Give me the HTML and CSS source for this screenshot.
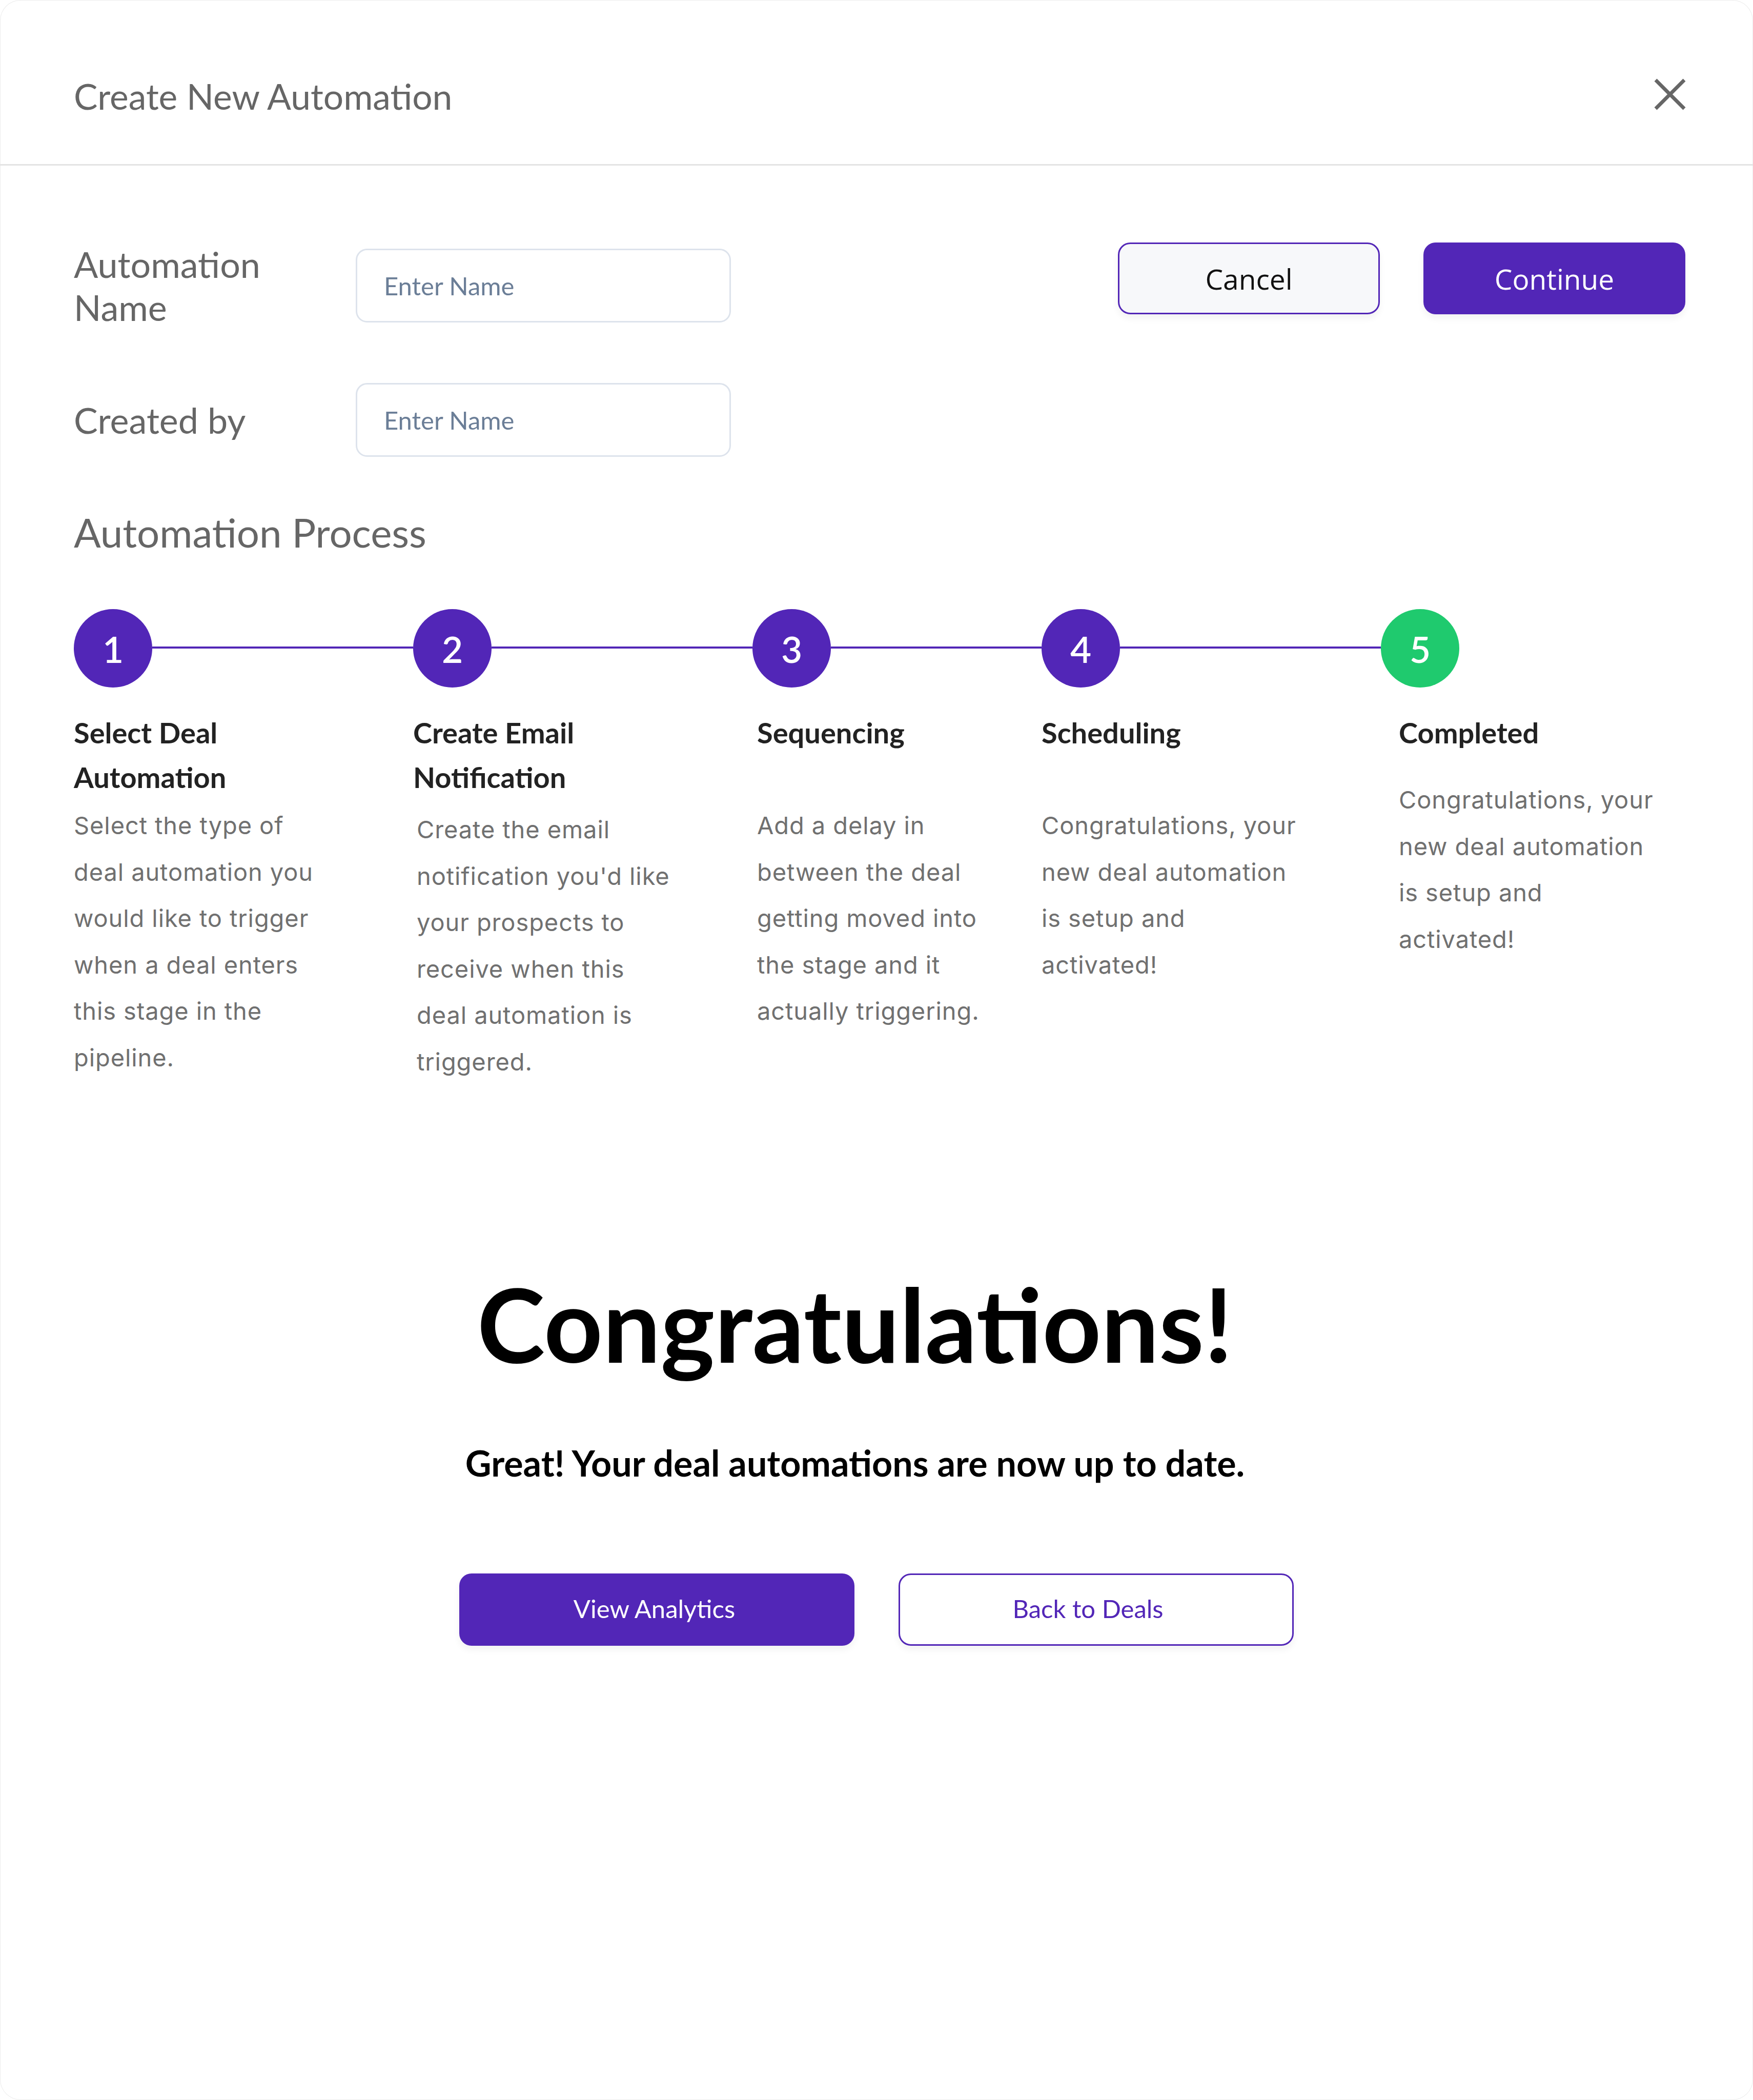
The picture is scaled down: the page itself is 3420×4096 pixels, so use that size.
FILE: index.html
```html
<!DOCTYPE html>
<html lang="en">
<head>
<meta charset="utf-8">
<title>Create New Automation</title>
<link rel="stylesheet" href="styles.css">
</head>
<body>
<div class="modal">
  <header class="modal-header">
    <h1 class="modal-title">Create New Automation</h1>
    <button class="close-btn" aria-label="Close">
      <svg width="64" height="64" viewBox="0 0 64 64"><path d="M4 4 L60 60 M60 4 L4 60" stroke="#666666" stroke-width="7" fill="none"/></svg>
    </button>
  </header>
  <main class="modal-body">
    <section class="top">
      <div class="form">
        <div class="field">
          <label class="field-label">Automation<br>Name</label>
          <input class="field-input" type="text" placeholder="Enter Name">
        </div>
        <div class="field field--second">
          <label class="field-label">Created by</label>
          <input class="field-input" type="text" placeholder="Enter Name">
        </div>
      </div>
      <div class="actions">
        <button class="btn btn-outline">Cancel</button>
        <button class="btn btn-primary">Continue</button>
      </div>
    </section>

    <h2 class="process-title">Automation Process</h2>

    <ol class="steps">
      <li class="step step--1">
        <div class="step-track"><span class="step-num">1</span><span class="step-line"></span></div>
        <h3 class="step-title">Select Deal<br>Automation</h3>
        <p class="step-desc">Select the type of<br>deal automation you<br>would like to trigger<br>when a deal enters<br>this stage in the<br>pipeline.</p>
      </li>
      <li class="step step--2">
        <div class="step-track"><span class="step-num">2</span><span class="step-line"></span></div>
        <h3 class="step-title">Create Email<br>Notification</h3>
        <p class="step-desc">Create the email<br>notification you'd like<br>your prospects to<br>receive when this<br>deal automation is<br>triggered.</p>
      </li>
      <li class="step step--3">
        <div class="step-track"><span class="step-num">3</span><span class="step-line"></span></div>
        <h3 class="step-title">Sequencing</h3>
        <p class="step-desc">Add a delay in<br>between the deal<br>getting moved into<br>the stage and it<br>actually triggering.</p>
      </li>
      <li class="step step--4">
        <div class="step-track"><span class="step-num">4</span><span class="step-line"></span></div>
        <h3 class="step-title">Scheduling</h3>
        <p class="step-desc">Congratulations, your<br>new deal automation<br>is setup and<br>activated!</p>
      </li>
      <li class="step step--5">
        <div class="step-track"><span class="step-num step-num--done">5</span></div>
        <h3 class="step-title">Completed</h3>
        <p class="step-desc">Congratulations, your<br>new deal automation<br>is setup and<br>activated!</p>
      </li>
    </ol>

    <section class="done">
      <h2 class="done-title">Congratulations!</h2>
      <p class="done-sub">Great! Your deal automations are now up to date.</p>
      <div class="done-actions">
        <button class="btn-lg btn-lg-primary">View Analytics</button>
        <button class="btn-lg btn-lg-outline">Back to Deals</button>
      </div>
    </section>
  </main>
</div>
</body>
</html>
```

FILE: styles.css
```css
* { box-sizing: border-box; }

html, body {
  margin: 0;
  padding: 0;
  background: #ffffff;
}

body {
  font-family: "Lato", "Liberation Sans", sans-serif;
}

.modal {
  width: 3420px;
  min-height: 4096px;
  background: #ffffff;
  border-radius: 40px;
  box-shadow: inset 0 0 0 1px #ececec;
}

.modal-header {
  height: 323px;
  padding: 54px 130px 0 144px;
  display: flex;
  align-items: center;
  justify-content: space-between;
  border-bottom: 3px solid #e3e3e3;
}

.modal-title {
  margin: 0;
  font-family: "Lato", sans-serif;
  font-weight: 400;
  font-size: 69.5px;
  line-height: 84px;
  color: #666666;
}

.close-btn {
  border: 0;
  background: none;
  padding: 0;
  width: 64px;
  height: 64px;
  margin-top: -6px;
  display: flex;
}

.modal-body {
  padding: 0 132px 0 144px;
}

.top {
  padding-top: 150px;
  display: flex;
  justify-content: space-between;
  align-items: flex-start;
}

.form {
  display: flex;
  flex-direction: column;
}

.field {
  display: flex;
  align-items: center;
}

.field--second {
  margin-top: 106px;
}

.field-label {
  width: 550px;
  font-family: "Lato", sans-serif;
  font-size: 70px;
  line-height: 84px;
  color: #666666;
}

.field-input {
  width: 732px;
  height: 144px;
  border: 3px solid #dde3ec;
  border-radius: 22px;
  padding: 0 0 0 52px;
  font-family: "Lato", sans-serif;
  font-size: 49px;
  color: #333;
  background: #ffffff;
  outline: none;
}

.field-input::placeholder {
  color: #6b7e97;
  opacity: 1;
}

.actions {
  display: flex;
  gap: 85px;
}

.btn {
  width: 511px;
  height: 140px;
  border-radius: 24px;
  font-family: "Open Sans", "Noto Sans", sans-serif;
  font-size: 55px;
  padding: 0;
  box-shadow: 0 8px 14px rgba(0, 0, 0, 0.05);
}

.btn-outline {
  background: #f7f8fa;
  border: 3px solid #5226b7;
  color: #111111;
}

.btn-primary {
  background: #5226b7;
  border: 0;
  color: #ffffff;
}

.process-title {
  margin: 100px 0 0 0;
  font-family: "Lato", sans-serif;
  font-weight: 400;
  font-size: 78px;
  line-height: 94px;
  color: #666666;
}

.steps {
  list-style: none;
  margin: 103px 0 0 0;
  padding: 0;
  display: flex;
}

.step { width: 662px; flex: none; }
.step--3 { width: 564px; }
.step--5 { flex: 1; width: auto; }

.step-track {
  display: flex;
  align-items: center;
}

.step-num {
  width: 153px;
  height: 153px;
  flex: none;
  border-radius: 50%;
  background: #5226b7;
  color: #ffffff;
  font-family: "Lato", sans-serif;
  font-weight: 600;
  font-size: 71px;
  display: flex;
  align-items: center;
  justify-content: center;
  padding-top: 2px;
}

.step-num--done {
  background: #1fca6e;
}

.step-line {
  flex: 1;
  height: 4px;
  margin-top: -4px;
  background: #5226b7;
}

.step-title {
  margin: 44px 0 0 0;
  min-height: 174px;
  font-family: "Lato", sans-serif;
  font-weight: 700;
  font-size: 56px;
  line-height: 87px;
  color: #222222;
}

.step-desc {
  margin: 6px 0 0 0;
  font-family: "Inter", "Liberation Sans", sans-serif;
  font-weight: 400;
  font-size: 47px;
  line-height: 90.5px;
  letter-spacing: 0.9px;
  color: #707070;
  white-space: nowrap;
}

.step--2 .step-desc {
  margin-top: 14px;
  padding-left: 7px;
}

.step--3 .step-title,
.step--3 .step-desc {
  padding-left: 9px;
}

.step--5 .step-title,
.step--5 .step-desc {
  padding-left: 35px;
}

.step--5 .step-title {
  min-height: 87px;
}

.step--5 .step-desc {
  margin-top: 43px;
}

.done {
  margin: 345px -132px 0 -144px;
  display: flex;
  flex-direction: column;
  align-items: center;
}

.done-title {
  margin: 0;
  padding-right: 84px;
  font-family: "Lato", sans-serif;
  font-weight: 700;
  font-size: 200px;
  line-height: 240px;
  color: #000000;
}

.done-sub {
  margin: 110px 0 0 0;
  padding-right: 84px;
  font-family: "Lato", sans-serif;
  font-weight: 700;
  font-size: 70px;
  line-height: 84px;
  color: #000000;
}

.done-actions {
  margin-top: 174px;
  display: flex;
  gap: 86px;
}

.btn-lg {
  width: 771px;
  height: 141px;
  border-radius: 24px;
  font-family: "Lato", sans-serif;
  font-size: 49px;
  padding: 0 0 6px 0;
  box-shadow: 0 8px 14px rgba(0, 0, 0, 0.05);
}

.btn-lg-primary {
  background: #5226b7;
  color: #ffffff;
  border: 0;
  padding-right: 10px;
}

.btn-lg-outline {
  background: #ffffff;
  color: #5226b7;
  border: 3px solid #5226b7;
  padding-right: 32px;
}
```
